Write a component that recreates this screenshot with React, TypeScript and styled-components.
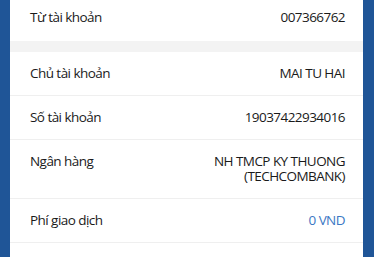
import React from "react";
import styled, { createGlobalStyle } from "styled-components";

const Global = createGlobalStyle`
  html, body { margin: 0; padding: 0; background: #ffffff; }
  body { font-family: "Open Sans", "Noto Sans", sans-serif; }
`;

const Frame = styled.div`
  display: flex;
  width: 374px;
  height: 257px;
  overflow: hidden;
  background: #ffffff;
`;

const SideBar = styled.div<{ $w: number }>`
  flex: 0 0 ${(p) => p.$w}px;
  background: #1f5597;
`;

const Sheet = styled.div`
  flex: 1 1 auto;
  display: flex;
  flex-direction: column;
  background: #ffffff;
`;

const Row = styled.div<{ $first?: boolean }>`
  display: flex;
  justify-content: space-between;
  align-items: flex-start;
  padding: ${(p) => (p.$first ? "10px 18px 16px 20px" : "14px 18px 14px 20px")};
  border-bottom: ${(p) => (p.$first ? "none" : "1px solid #efefef")};
  font-size: 13.5px;
  letter-spacing: -0.55px;
  line-height: 15px;
  flex-shrink: 0;
`;

const Label = styled.span`
  color: #1a1a1a;
`;

const Value = styled.span<{ $accent?: boolean }>`
  color: ${(p) => (p.$accent ? "#3b78c4" : "#1a1a1a")};
  text-align: right;
`;

const Band = styled.div`
  height: 11px;
  background: #f3f3f3;
  flex-shrink: 0;
`;

export default function App() {
  return (
    <>
      <Global />
      <Frame>
        <SideBar $w={10} />
        <Sheet>
          <Row $first>
            <Label>Từ tài khoản</Label>
            <Value>007366762</Value>
          </Row>
          <Band />
          <Row>
            <Label>Chủ tài khoản</Label>
            <Value>MAI TU HAI</Value>
          </Row>
          <Row>
            <Label>Số tài khoản</Label>
            <Value>19037422934016</Value>
          </Row>
          <Row>
            <Label>Ngân hàng</Label>
            <Value>
              NH TMCP KY THUONG
              <br />
              (TECHCOMBANK)
            </Value>
          </Row>
          <Row>
            <Label>Phí giao dịch</Label>
            <Value $accent>0 VND</Value>
          </Row>
          <Row>
            <Label>&nbsp;</Label>
          </Row>
        </Sheet>
        <SideBar $w={11} />
      </Frame>
    </>
  );
}
